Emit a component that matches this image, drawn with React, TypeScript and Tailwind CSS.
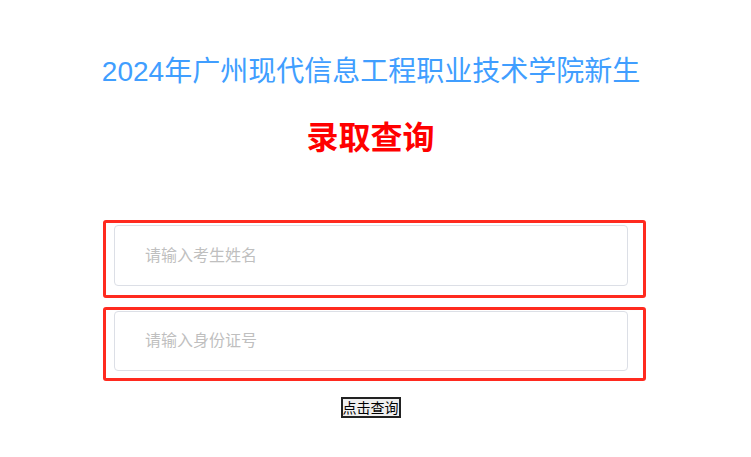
export default function App() {
  return (
    <div className="w-[751px] h-[457px] bg-white" style={{ fontFamily: '"Liberation Sans", "Noto Sans CJK SC", sans-serif' }}>
      <div className="pt-[54px] pr-[9px] text-center text-[28px] leading-[36px] text-[#409eff]">
        2024年广州现代信息工程职业技术学院新生
      </div>
      <div className="mt-[29px] pr-[10px] text-center text-[32px] leading-[38px] font-bold text-[#ff0000]">录取查询</div>

      <div className="mt-[63px] w-[543px] ml-[103px] flex flex-col gap-[9px]">
        <div className="border-[3px] border-[#ff2a1f] rounded-[3px] pt-[2px] pl-[8px] pr-[15px] pb-[9px]">
          <input
            className="block w-full h-[61px] border border-[#dcdfe6] rounded-[4px] pl-[30px] text-[16px] outline-none placeholder:text-[#bfbfbf]"
            placeholder="请输入考生姓名"
          />
        </div>
        <div className="border-[3px] border-[#ff2a1f] rounded-[3px] pt-[1px] pl-[8px] pr-[15px] pb-[7px]">
          <input
            className="block w-full h-[60px] border border-[#dcdfe6] rounded-[4px] pl-[30px] text-[16px] outline-none placeholder:text-[#bfbfbf]"
            placeholder="请输入身份证号"
          />
        </div>
      </div>

      <div className="mt-[16px] pr-[10px] flex justify-center">
        <button className="h-[21px] px-0 border-2 border-[#222] bg-[#efefef] text-[14px] leading-[16px] text-black">
          点击查询
        </button>
      </div>
    </div>
  );
}
